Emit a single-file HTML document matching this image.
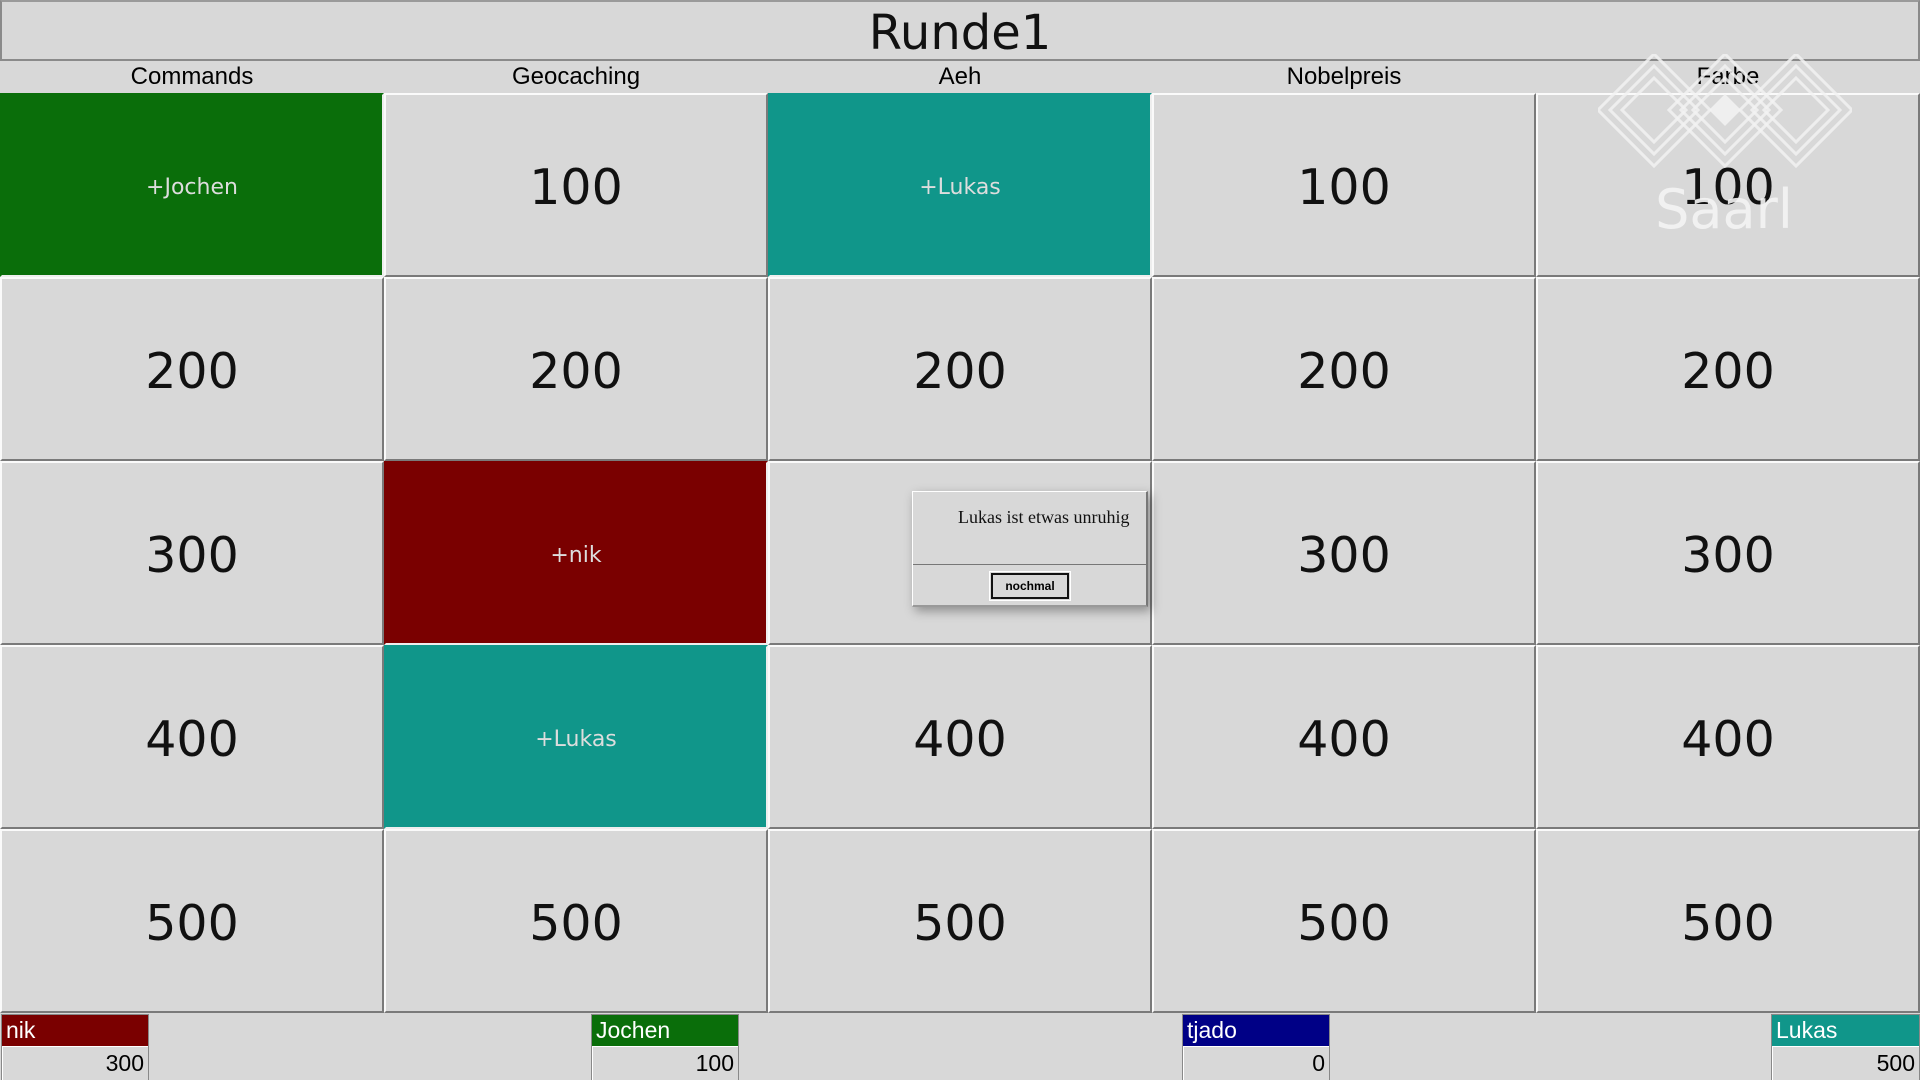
<!DOCTYPE html>
<html><head><meta charset="utf-8"><style>
*{margin:0;padding:0;box-sizing:border-box}
body{width:1920px;height:1080px;background:#d8d8d8;position:relative;overflow:hidden;font-family:"DejaVu Sans","Liberation Sans",sans-serif}
.title{position:absolute;left:0;top:0;width:1920px;height:61px;border:2px solid #8a8a8a;border-top-color:#9a9a9a;font-size:48px;text-align:center;line-height:62px;color:#111}
.hdr{position:absolute;top:61px;height:32px;width:384px;text-align:center;font-family:"Liberation Sans",sans-serif;font-size:24px;line-height:32px;color:#000}
.cell{position:absolute;width:384px;height:184px;border:2px solid;border-color:#fafafa #7a7a7a #7a7a7a #fafafa;text-align:center;line-height:186px;font-size:49px;color:#111;background:#d8d8d8}
.cell.s{font-size:22px;color:#ddd}
.p{position:absolute;top:1014px;width:148px;height:66px;border:1px solid #888}
.p .n{height:32px;color:#fff;font-family:"Liberation Sans",sans-serif;font-size:23px;line-height:30px;padding-left:4px;border-bottom:1px solid #fff}
.p .v{height:33px;text-align:right;font-family:"Liberation Sans",sans-serif;font-size:23px;line-height:32px;padding-right:4px;color:#000;background:#d8d8d8;border-left:1px solid #fff}
</style></head><body>
<div class="title">Runde1</div>
<div class="hdr" style="left:0">Commands</div>
<div class="hdr" style="left:384px">Geocaching</div>
<div class="hdr" style="left:768px">Aeh</div>
<div class="hdr" style="left:1152px">Nobelpreis</div>
<div class="hdr" style="left:1536px">Farbe</div>

<div class="cell s" style="left:0;top:93px;background:#0a6e0a;border-color:#0a6e0a #eee #eee #0a6e0a">+Jochen</div>
<div class="cell" style="left:384px;top:93px">100</div>
<div class="cell s" style="left:768px;top:93px;background:#10968a;border-color:#10968a #eee #eee #10968a">+Lukas</div>
<div class="cell" style="left:1152px;top:93px">100</div>
<div class="cell" style="left:1536px;top:93px">100</div>

<div class="cell" style="left:0;top:277px">200</div>
<div class="cell" style="left:384px;top:277px">200</div>
<div class="cell" style="left:768px;top:277px">200</div>
<div class="cell" style="left:1152px;top:277px">200</div>
<div class="cell" style="left:1536px;top:277px">200</div>

<div class="cell" style="left:0;top:461px">300</div>
<div class="cell s" style="left:384px;top:461px;background:#7a0000;border-color:#7a0000 #eee #eee #7a0000">+nik</div>
<div class="cell" style="left:768px;top:461px"></div>
<div class="cell" style="left:1152px;top:461px">300</div>
<div class="cell" style="left:1536px;top:461px">300</div>

<div class="cell" style="left:0;top:645px">400</div>
<div class="cell s" style="left:384px;top:645px;background:#10968a;border-color:#10968a #eee #eee #10968a">+Lukas</div>
<div class="cell" style="left:768px;top:645px">400</div>
<div class="cell" style="left:1152px;top:645px">400</div>
<div class="cell" style="left:1536px;top:645px">400</div>

<div class="cell" style="left:0;top:829px">500</div>
<div class="cell" style="left:384px;top:829px">500</div>
<div class="cell" style="left:768px;top:829px">500</div>
<div class="cell" style="left:1152px;top:829px">500</div>
<div class="cell" style="left:1536px;top:829px">500</div>

<svg style="position:absolute;left:1598px;top:54px" width="254" height="176" viewBox="0 0 254 176">
<g fill="none" stroke="#f2f2f2" stroke-opacity="0.85" stroke-width="3">
<polygon points="56,0 112,56 56,112 0,56"/><polygon points="56,12 100,56 56,100 12,56"/><polygon points="56,24 88,56 56,88 24,56"/>
<polygon points="127,0 183,56 127,112 71,56"/><polygon points="127,12 171,56 127,100 83,56"/><polygon points="127,24 159,56 127,88 95,56"/>
<polygon points="198,0 254,56 198,112 142,56"/><polygon points="198,12 242,56 198,100 154,56"/><polygon points="198,24 230,56 198,88 166,56"/>
</g>
<g fill="#f2f2f2" fill-opacity="0.9"><polygon points="127,40 143,56 127,72 111,56"/></g>
<text x="126" y="174" text-anchor="middle" font-family="DejaVu Sans" font-size="54" fill="#f4f4f4" fill-opacity="0.9">Saarl</text>
</svg>

<div style="position:absolute;left:912px;top:491px;width:236px;height:116px;background:#d8d8d8;border:1px solid #fff;border-right:2px solid #777;border-bottom:2px solid #999;box-shadow:3px 4px 10px rgba(0,0,0,.35)">
<div style="height:73px;border-bottom:1px solid #777;font-family:'Liberation Serif',serif;font-size:18px;padding:15px 0 0 45px;color:#111;white-space:nowrap">Lukas ist etwas unruhig</div>
<div style="position:absolute;left:76px;top:79px;width:82px;height:30px;border:1px solid #fff;padding:1px"><div style="border:2px solid #111;height:100%;font-family:'Liberation Sans',sans-serif;font-weight:bold;font-size:12px;text-align:center;line-height:22px">nochmal</div></div>
</div>

<div class="p" style="left:1px"><div class="n" style="background:#7a0000">nik</div><div class="v">300</div></div>
<div class="p" style="left:591px"><div class="n" style="background:#0a6e0a">Jochen</div><div class="v">100</div></div>
<div class="p" style="left:1182px"><div class="n" style="background:#000086">tjado</div><div class="v">0</div></div>
<div class="p" style="left:1771px;width:149px"><div class="n" style="background:#10968a">Lukas</div><div class="v">500</div></div>
</body></html>
